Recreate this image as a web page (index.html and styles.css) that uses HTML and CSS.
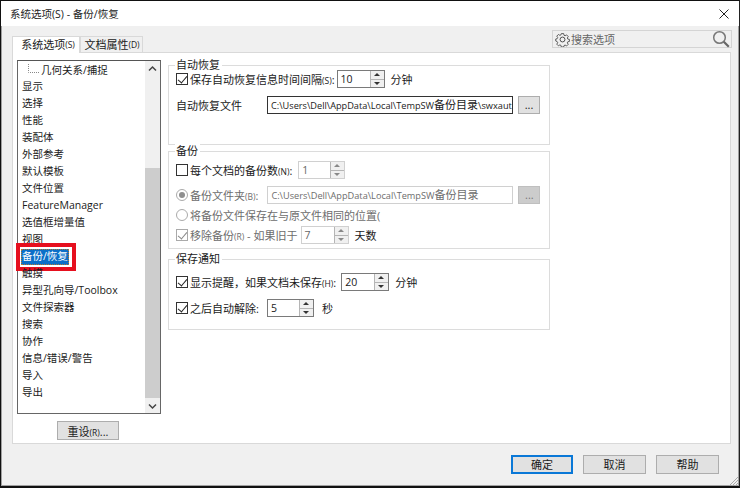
FILE: index.html
```html
<!DOCTYPE html>
<html lang="zh-CN">
<head>
<meta charset="utf-8">
<title>系统选项(S) - 备份/恢复</title>
<link rel="stylesheet" href="styles.css">
</head>
<body>
<div class="window">
  <header class="titlebar">
    <span class="title">系统选项(S) - 备份/恢复</span>
    <svg class="close" width="12" height="12" viewBox="0 0 12 12"><path d="M1.5 1.5l9 9M10.5 1.5l-9 9" stroke="#222" stroke-width="1" fill="none"/></svg>
  </header>
  <div class="client">
    <div class="topbar">
      <div class="tabs">
        <div class="tab active">系统选项<small>(S)</small></div>
        <div class="tab">文档属性<small>(D)</small></div>
      </div>
      <div class="search">
        <svg width="15" height="15" viewBox="0 0 16 16" class="gear"><path d="M6.6 1h2.8l.4 2 1.3.6 1.7-1.1 2 2-1.1 1.7.6 1.3 1.9.4v2.4l-1.9.4-.6 1.3 1.1 1.7-2 2-1.7-1.1-1.3.6-.4 1.7H6.6l-.4-1.9-1.3-.6-1.7 1.1-2-2 1.1-1.7-.6-1.3L0 9.8V7.4l1.7-.4.6-1.3-1.1-1.7 2-2 1.700 1.100 1.300-.6z" fill="none" stroke="#444" stroke-width="1" transform="translate(.8 .8) scale(.9)"/><circle cx="8" cy="8" r="2.600" fill="none" stroke="#444" stroke-width="1"/></svg>
        <span class="search-text">搜索选项</span>
        <svg class="loupe" width="18" height="18" viewBox="0 0 18 18"><circle cx="7.500" cy="7.500" r="5.800" fill="none" stroke="#777" stroke-width="1.500"/><path d="M11.800 11.800l5 5" stroke="#666" stroke-width="2.200" fill="none"/></svg>
      </div>
    </div>
    <div class="panel">
      <div class="side">
        <div class="listbox">
          <ul class="items">
            <li class="tree"><svg width="19" height="12" viewBox="0 0 19 12" class="treeline"><path d="M7.500 0v8.500H18" stroke="#888" stroke-width="1" stroke-dasharray="1 1" fill="none"/></svg>几何关系/捕捉</li>
            <li>显示</li>
            <li>选择</li>
            <li>性能</li>
            <li>装配体</li>
            <li>外部参考</li>
            <li>默认模板</li>
            <li>文件位置</li>
            <li>FeatureManager</li>
            <li>选值框增量值</li>
            <li>视图</li>
            <li class="current"><span class="selected">备份/恢复</span></li>
            <li>触摸</li>
            <li>异型孔向导/Toolbox</li>
            <li>文件探索器</li>
            <li>搜索</li>
            <li>协作</li>
            <li>信息/错误/警告</li>
            <li>导入</li>
            <li>导出</li>
          </ul>
          <div class="scrollbar">
            <svg class="arrow" width="15" height="16" viewBox="0 0 15 16"><path d="M4 9.500l3.500-3.500 3.500 3.500" stroke="#444" stroke-width="1.500" fill="none"/></svg>
            <div class="gutter"><div class="thumb"></div></div>
            <svg class="arrow" width="15" height="16" viewBox="0 0 15 16"><path d="M4 6.500l3.500 3.500 3.500-3.500" stroke="#444" stroke-width="1.500" fill="none"/></svg>
          </div>
        </div>
        <button class="btn reset">重设<small>(R)</small>...</button>
      </div>
      <div class="groups">
        <section class="group g1">
          <div class="legend">自动恢复</div>
          <div class="row r1a">
            <span class="check on"></span><span>保存自动恢复信息时间间隔<small>(S)</small>:</span>
            <span class="spin s1a"><span class="val">10</span><span class="arrows"><i class="up"></i><i class="down"></i></span></span>
            <span class="unit">分钟</span>
          </div>
          <div class="row r1b">
            <span class="filelabel">自动恢复文件</span>
            <span class="path">C:\Users\Dell\AppData\Local\TempSW<span class="cjk">备份目录</span>\swxaut</span>
            <button class="btn dots">...</button>
          </div>
        </section>
        <section class="group g2">
          <div class="legend">备份</div>
          <div class="row r2a">
            <span class="check"></span><span>每个文档的备份数<small>(N)</small>:</span>
            <span class="spin muted s2a"><span class="val">1</span><span class="arrows"><i class="up"></i><i class="down"></i></span></span>
          </div>
          <div class="row r2b off">
            <span class="radio on"></span><span>备份文件夹<small>(B)</small>:</span>
            <span class="path muted">C:\Users\Dell\AppData\Local\TempSW<span class="cjk">备份目录</span></span>
            <button class="btn dots disabled">...</button>
          </div>
          <div class="row r2c off">
            <span class="radio"></span><span class="clip">将备份文件保存在与原文件相同的位置(</span>
          </div>
          <div class="row r2d">
            <span class="check on dim"></span><span class="offtext">移除备份<small>(R)</small> - 如果旧于</span>
            <span class="spin muted s2d"><span class="val">7</span><span class="arrows"><i class="up"></i><i class="down"></i></span></span>
            <span class="unit">天数</span>
          </div>
        </section>
        <section class="group g3">
          <div class="legend">保存通知</div>
          <div class="row r3a">
            <span class="check on"></span><span>显示提醒，如果文档未保存<small>(H)</small>:</span>
            <span class="spin s3a"><span class="val">20</span><span class="arrows"><i class="up"></i><i class="down"></i></span></span>
            <span class="unit">分钟</span>
          </div>
          <div class="row r3b">
            <span class="check on"></span><span>之后自动解除:</span>
            <span class="spin s3b"><span class="val">5</span><span class="arrows"><i class="up"></i><i class="down"></i></span></span>
            <span class="unit sec">秒</span>
          </div>
        </section>
      </div>
    </div>
    <footer class="actions">
      <button class="btn action primary">确定</button>
      <button class="btn action">取消</button>
      <button class="btn action">帮助</button>
    </footer>
    <svg class="grip" width="11" height="11" viewBox="0 0 11 11"><path d="M10.500 1.500l-9 9M10.500 4.500l-6 6M10.500 7.500l-3 3" stroke="#aaa" stroke-width="1" fill="none"/></svg>
  </div>
</div>
</body>
</html>
```
FILE: styles.css
```css
*, *::before, *::after { box-sizing: border-box; }
html, body { margin: 0; padding: 0; }
body {
  width: 740px;
  height: 488px;
  overflow: hidden;
  font-family: "Open Sans", "Noto Sans CJK SC", sans-serif;
  font-size: 10.500px;
  color: #1a1a1a;
}
small { font-size: 8.500px; }
.window {
  width: 740px;
  height: 488px;
  display: flex;
  flex-direction: column;
  background: #f0f0f0;
  border-top: 1px solid #111;
  border-left: 1px solid #111;
  border-right: 1px solid #222;
  border-bottom: 2px solid #111;
  box-shadow: inset 1px 0 0 #a0a0a0, inset -1px 0 0 #a0a0a0, inset 0 -1px 0 #a0a0a0;
}
.titlebar {
  height: 25px;
  flex: none;
  display: flex;
  align-items: center;
  justify-content: space-between;
  background: #fff;
  padding: 0 9px 0 9px;
}
.title { font-size: 10.500px; color: #222; }
.client {
  flex: 1;
  display: flex;
  flex-direction: column;
  padding: 4px 7px 0 11px;
  position: relative;
}
.topbar {
  height: 22px;
  flex: none;
  display: flex;
  justify-content: space-between;
  align-items: flex-start;
}
.tabs {
  display: flex;
  align-items: flex-end;
  height: 22px;
  font-size: 11px;
}
.tab {
  height: 16px;
  width: 63px;
  background: #f0f0f0;
  border: 1px solid #d9d9d9;
  border-bottom: 0;
  display: flex;
  align-items: center;
  justify-content: center;
  white-space: nowrap;
  padding: 0 0 1px 1px;
}
.tab.active {
  height: 17px;
  width: 68px;
  background: #fff;
  margin-bottom: -1px;
  position: relative;
  z-index: 1;
  padding: 0 0 2px 4px;
}
.search {
  width: 180px;
  height: 18px;
  background: #f0f0f0;
  border: 1px solid #d4d4d4;
  display: flex;
  align-items: center;
  padding: 0 1px 0 2px;
  font-size: 11px;
}
.gear { flex: none; }
.search-text { color: #666; margin-left: 1px; flex: 1; }
.loupe { flex: none; }
.panel {
  width: 719px;
  height: 392px;
  flex: none;
  background: #fff;
  border: 1px solid #d9d9d9;
  display: flex;
  padding: 7px 0 0 4px;
}
.side {
  width: 144px;
  flex: none;
  display: flex;
  flex-direction: column;
}
.listbox {
  height: 354px;
  flex: none;
  border: 1px solid #666;
  border-top-color: #555;
  display: flex;
  background: #fff;
}
.items {
  flex: 1;
  margin: 0;
  padding: 0;
  list-style: none;
}
.items li {
  height: 17px;
  line-height: 16px;
  padding-left: 4px;
  white-space: nowrap;
  position: relative;
}
.items li.tree { display: flex; align-items: center; padding-left: 3px; }
.treeline { flex: none; margin-right: 1px; color: #888; }
.selected {
  display: inline-block;
  background: #0c6fc8;
  color: #fff;
  outline: 1px dotted #b97a2c;
  outline-offset: -1px;
  height: 16px;
  line-height: 15px;
  padding: 0 1px;
  margin-left: -1px;
}
.current::after {
  content: "";
  position: absolute;
  left: -2px;
  top: -5px;
  width: 60px;
  height: 28px;
  border: 4px solid #e60f1e;
}
.scrollbar {
  width: 15px;
  flex: none;
  display: flex;
  flex-direction: column;
  background: #f0f0f0;
}
.arrow { flex: none; display: block; }
.gutter { flex: 1; padding-top: 91px; }
.thumb { height: 230px; background: #cdcdcd; }
.btn {
  font: inherit;
  font-size: 11px;
  color: #1a1a1a;
  background: #e1e1e1;
  border: 1px solid #adadad;
  padding: 0;
  display: block;
}
.reset {
  width: 62px;
  height: 19px;
  margin: 7px 0 0 40px;
}
.groups {
  margin-left: 7px;
  margin-top: 5px;
  width: 382px;
  flex: none;
  display: flex;
  flex-direction: column;
  font-size: 11px;
}
.group {
  border: 1px solid #dcdcdc;
  flex: none;
}
.g1 { height: 80px; }
.g2 { height: 98px; margin-top: 6px; }
.g3 { height: 71px; margin-top: 10px; }
.legend {
  width: fit-content;
  background: #fff;
  margin: -9px 0 0 6px;
  padding: 0 2px 0 1px;
  height: 15px;
  line-height: 15px;
}
.row {
  display: flex;
  align-items: center;
  height: 18px;
  padding-left: 7px;
  white-space: nowrap;
}
.r1a { margin-top: -2px; }
.r1b { margin-top: 8px; }
.r2a { margin-top: 3px; }
.r2b { margin-top: 7px; }
.r2c { margin-top: 1px; height: 19px; }
.r2d { margin-top: 2px; }
.r3a { margin-top: 7px; }
.r3b { margin-top: 8px; }
.off, .offtext { color: #6d6d6d; }
.check {
  width: 12px;
  height: 12px;
  flex: none;
  border: 1px solid #333;
  background: #fff;
  margin-right: 2px;
  position: relative;
}
.check.on::after {
  content: "";
  position: absolute;
  left: 3px;
  top: 0;
  width: 5px;
  height: 9px;
  border-right: 1px solid #222;
  border-bottom: 1px solid #222;
  transform: rotate(40deg);
}
.check.dim { border-color: #aaa; }
.check.dim::after { border-color: #888; }
.radio {
  width: 12px;
  height: 12px;
  flex: none;
  border: 1px solid #aaa;
  border-radius: 50%;
  background: #fff;
  margin-right: 2px;
  position: relative;
}
.radio.on::after {
  content: "";
  position: absolute;
  inset: 2px;
  border-radius: 50%;
  background: #8e8e8e;
}
.spin {
  display: flex;
  height: 18px;
  flex: none;
  background: #fff;
  border: 1px solid #7a7a7a;
  color: #1a1a1a;
}
.spin.muted { border-color: #d0d0d0; color: #666; }
.val { flex: 1; padding-left: 3px; line-height: 17px; font-size: 10.500px; }
.arrows {
  width: 14px;
  flex: none;
  display: flex;
  flex-direction: column;
  background: #f0f0f0;
  border-left: 1px solid #b5b5b5;
}
.arrows i {
  flex: 1;
  position: relative;
  display: block;
}
.arrows i.up { border-bottom: 1px solid #b5b5b5; }
.arrows i::after {
  content: "";
  position: absolute;
  left: 3px;
  top: 2px;
  border-left: 3px solid transparent;
  border-right: 3px solid transparent;
}
.arrows i.up::after { border-bottom: 3px solid #333; }
.arrows i.down::after { border-top: 3px solid #333; }
.muted .arrows i.up::after { border-bottom-color: #888; }
.muted .arrows i.down::after { border-top-color: #888; }
.s1a { width: 48px; margin-left: 2px; }
.s2a { width: 47px; margin-left: 6px; }
.s2d { width: 48px; margin-left: 3px; }
.s3a { width: 48px; margin-left: 5px; }
.s3b { width: 47px; margin-left: 8px; }
.unit { margin-left: 6px; }
.unit.sec { margin-left: 8px; }
.filelabel { width: 91px; flex: none; }
.path {
  width: 246px;
  height: 18px;
  flex: none;
  overflow: hidden;
  background: #fff;
  border: 1px solid #333;
  line-height: 16px;
  padding-left: 3px;
  font-size: 9.200px;
}
.cjk { font-size: 11px; }
.path.muted { border-color: #d0d0d0; color: #6d6d6d; margin-left: 9px; }
.dots {
  width: 22px;
  height: 18px;
  margin-left: 5px;
  flex: none;
  line-height: 14px;
}
.dots.disabled { background: #ccc; border-color: #bfbfbf; color: #777; }
.clip { width: 193px; overflow: hidden; }
.actions {
  flex: 1;
  display: flex;
  justify-content: flex-end;
  gap: 10px;
  padding: 11px 13px 0 0;
}
.action { width: 63px; height: 19px; line-height: 16px; }
.primary { border: 2px solid #0a78d7; width: 62px; }
.grip { position: absolute; right: 0; bottom: 0; }
```
